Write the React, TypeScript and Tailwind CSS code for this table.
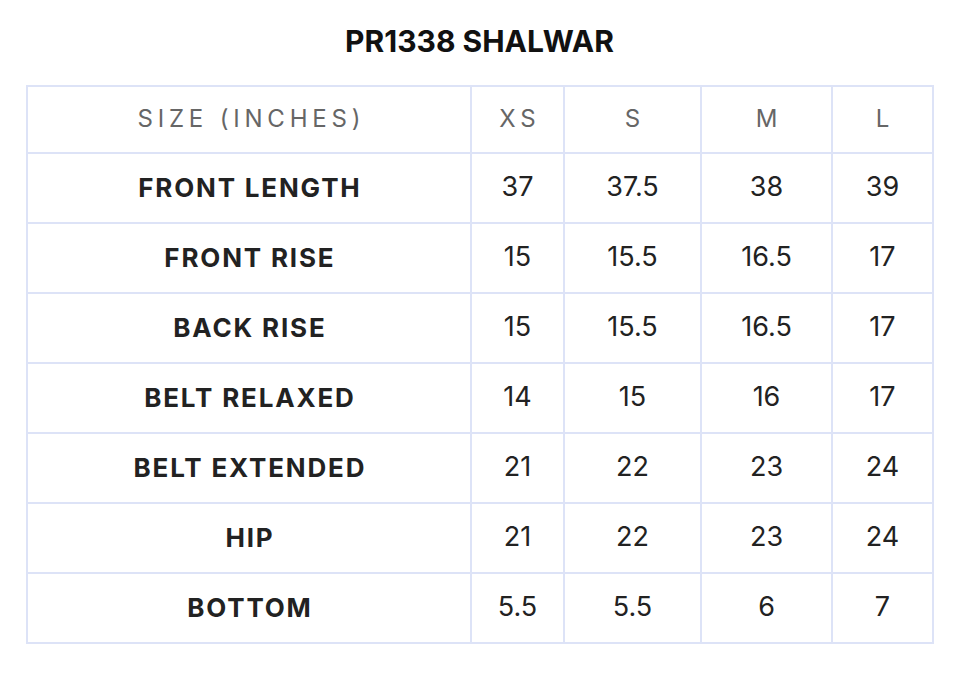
const sizes = ['XS', 'S', 'M', 'L'];

const rows: [string, string[]][] = [
  ['FRONT LENGTH', ['37', '37.5', '38', '39']],
  ['FRONT RISE', ['15', '15.5', '16.5', '17']],
  ['BACK RISE', ['15', '15.5', '16.5', '17']],
  ['BELT RELAXED', ['14', '15', '16', '17']],
  ['BELT EXTENDED', ['21', '22', '23', '24']],
  ['HIP', ['21', '22', '23', '24']],
  ['BOTTOM', ['5.5', '5.5', '6', '7']],
];

export default function App() {
  return (
    <div className="w-[959px] h-[678px] bg-white font-['Inter',sans-serif] text-[#222]">
      <h1 className="pt-[23px] text-center text-[30px] font-bold leading-[36px] text-[#111]">
        PR1338 SHALWAR
      </h1>

      <table className="ml-[26px] mt-[26px] w-[906px] table-fixed border-collapse border-2 border-[#dde3f7]">
        <colgroup>
          <col className="w-[444px]" />
          <col className="w-[93px]" />
          <col className="w-[137px]" />
          <col className="w-[131px]" />
          <col className="w-[101px]" />
        </colgroup>
        <thead>
          <tr className="h-[67px]">
            <th className="border-2 border-[#dde3f7] pb-[2px] pl-[0.2em] text-center text-[24px] font-normal tracking-[0.2em] text-[#666]">
              SIZE (INCHES)
            </th>
            {sizes.map((s) => (
              <th
                key={s}
                className="border-2 border-[#dde3f7] pb-[2px] pl-[0.2em] text-center text-[24px] font-normal tracking-[0.2em] text-[#666]"
              >
                {s}
              </th>
            ))}
          </tr>
        </thead>
        <tbody>
          {rows.map(([label, vals]) => (
            <tr key={label} className="h-[70px]">
              <td className="border-2 border-[#dde3f7] pb-[2px] pl-[0.07em] text-center text-[26px] font-bold tracking-[0.07em]">
                {label}
              </td>
              {vals.map((v, i) => (
                <td key={i} className="border-2 border-[#dde3f7] pb-[2px] text-center text-[27px]">
                  {v}
                </td>
              ))}
            </tr>
          ))}
        </tbody>
      </table>
    </div>
  );
}
